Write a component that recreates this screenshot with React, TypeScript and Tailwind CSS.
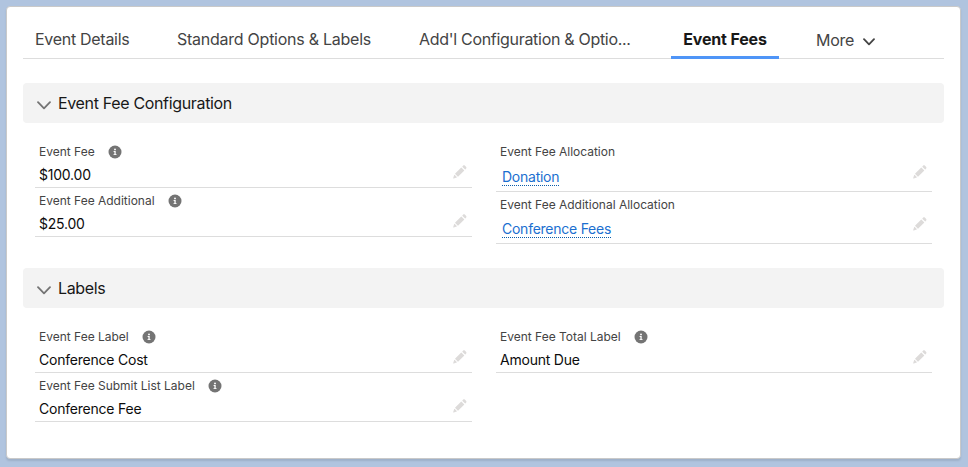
import type { ReactNode } from "react";

function Pencil() {
  return (
    <svg className="h-[14px] w-[14px] shrink-0" viewBox="0.4 -0.2 14 14" fill="#dddbda">
      <path d="M2.6 8.3 8.4 2.5a.4.4 0 0 1 .6 0l2.5 2.5a.4.4 0 0 1 0 .6L5.7 11.4a.4.4 0 0 1-.6 0L2.6 8.9a.4.4 0 0 1 0-.6z" />
      <path d="M9.9 1.1l.5-.5c.6-.6 1.4-.6 2 0l1 1c.6.6.6 1.4 0 2l-.5.5a.4.4 0 0 1-.6 0L9.9 1.7a.4.4 0 0 1 0-.6z" />
      <path d="M1.6 9.9a.4.4 0 0 1 .6-.1l2 2c.2.2.1.5-.1.6L1.2 13.4c-.4.1-.7-.2-.6-.6z" />
    </svg>
  );
}

function Info() {
  return (
    <svg className="block h-[14px] w-[14px] shrink-0" viewBox="-0.5 -0.5 14 14">
      <circle cx="6.5" cy="6.5" r="6.5" fill="#747474" />
      <circle cx="6.5" cy="3.9" r="0.95" fill="#fff" />
      <path d="M5.1 5.5H7.2V8.7H8.1V9.6H5V8.7H5.9V6.4H5.1z" fill="#fff" />
    </svg>
  );
}

function SectionHeader({ title }: { title: string }) {
  return (
    <div className="flex h-10 items-center rounded-[4px] bg-[#f3f3f3] pl-[14px]">
      <svg className="mt-[5px] h-[9px] w-[14px]" viewBox="0 0 14 9" fill="none" stroke="#747474" strokeWidth="1.8" strokeLinecap="round" strokeLinejoin="round">
        <path d="M1 1.2 7 7.4 13 1.2" />
      </svg>
      <h2 className="ml-[7px] text-[16px] leading-6 tracking-[-0.34px] text-[#181818]">{title}</h2>
    </div>
  );
}

type FieldProps = { label: string; children: ReactNode; info?: boolean; size?: string; edit?: string };

function Field({ label, children, info, size = "h-[49px]", edit = "pt-[26px]" }: FieldProps) {
  return (
    <div className={`flex items-start justify-between border-b border-[#dddddd] pr-[5px] pl-1 ${size}`}>
      <div>
        <div className="flex h-[26px] items-center gap-[13px] text-[12px] tracking-[-0.01px] whitespace-nowrap text-[#444444]">
          <span>{label}</span>
          {info && <Info />}
        </div>
        {children}
      </div>
      <div className={edit}>
        <Pencil />
      </div>
    </div>
  );
}

function Value({ children }: { children: ReactNode }) {
  return <div className="h-5 text-[14px] leading-5 tracking-[-0.22px] text-[#0c0c0c]">{children}</div>;
}

function LinkValue({ children, offset = "pt-[3px]" }: { children: ReactNode; offset?: string }) {
  return (
    <div className={`flex pl-[2px] ${offset}`}>
      <a className="h-[18px] border-b border-dotted border-[#0b5cab] text-[14px] leading-[18px] tracking-[-0.25px] text-[#1b6fd0]">{children}</a>
    </div>
  );
}

export default function App() {
  return (
    <div className="h-[467px] w-[968px] overflow-hidden bg-[#b0c4df] pt-[6px] pl-[6px] font-['Inter','Liberation_Sans',sans-serif]">
      <main className="h-[453px] w-[955px] rounded-[4px] border border-[#c9c9c9] bg-white px-4 shadow-[0_2px_2px_rgba(0,0,0,0.1)]">
        <nav className="flex h-[52px] items-start border-b border-[#dddddd] pl-3 text-[16px] leading-6 whitespace-nowrap text-[#444444]">
          <span className="mt-5 w-[142px] tracking-[-0.29px]">Event Details</span>
          <span className="mt-5 w-[242px] tracking-[-0.25px]">Standard Options &amp; Labels</span>
          <span className="mt-5 w-[252px] tracking-[-0.3px]">Add'l Configuration &amp; Optio...</span>
          <span className="h-[52px] w-[108px] border-b-[3px] border-[#4f95f7] pt-5 text-center font-bold tracking-[-0.15px] text-[#181818]">Event Fees</span>
          <span className="mt-[21px] ml-[37px] flex items-center">
            <span className="w-[47px] tracking-[-0.3px]">More</span>
            <svg className="mt-[3px] h-2 w-3" viewBox="0 0 12 8" fill="none" stroke="#444" strokeWidth="1.8" strokeLinecap="round" strokeLinejoin="round">
              <path d="M1 1.2 6 6.4 11 1.2" />
            </svg>
          </span>
        </nav>

        <section className="pt-6">
          <SectionHeader title="Event Fee Configuration" />
          <div className="grid h-[121px] grid-cols-[437px_436px] items-start gap-x-6 pt-4 pl-3">
            <div>
              <Field label="Event Fee" info><Value>$100.00</Value></Field>
              <Field label="Event Fee Additional" info><Value>$25.00</Value></Field>
            </div>
            <div>
              <Field label="Event Fee Allocation" size="h-[53px]"><LinkValue>Donation</LinkValue></Field>
              <Field label="Event Fee Additional Allocation" size="h-[52px]" edit="pt-[25px]"><LinkValue offset="pt-[2px]">Conference Fees</LinkValue></Field>
            </div>
          </div>
        </section>

        <section className="pt-6">
          <SectionHeader title="Labels" />
          <div className="grid grid-cols-[437px_436px] items-start gap-x-6 pt-4 pl-3">
            <div>
              <Field label="Event Fee Label" info><Value>Conference Cost</Value></Field>
              <Field label="Event Fee Submit List Label" info><Value>Conference Fee</Value></Field>
            </div>
            <Field label="Event Fee Total Label" info><Value>Amount Due</Value></Field>
          </div>
        </section>
      </main>
    </div>
  );
}
